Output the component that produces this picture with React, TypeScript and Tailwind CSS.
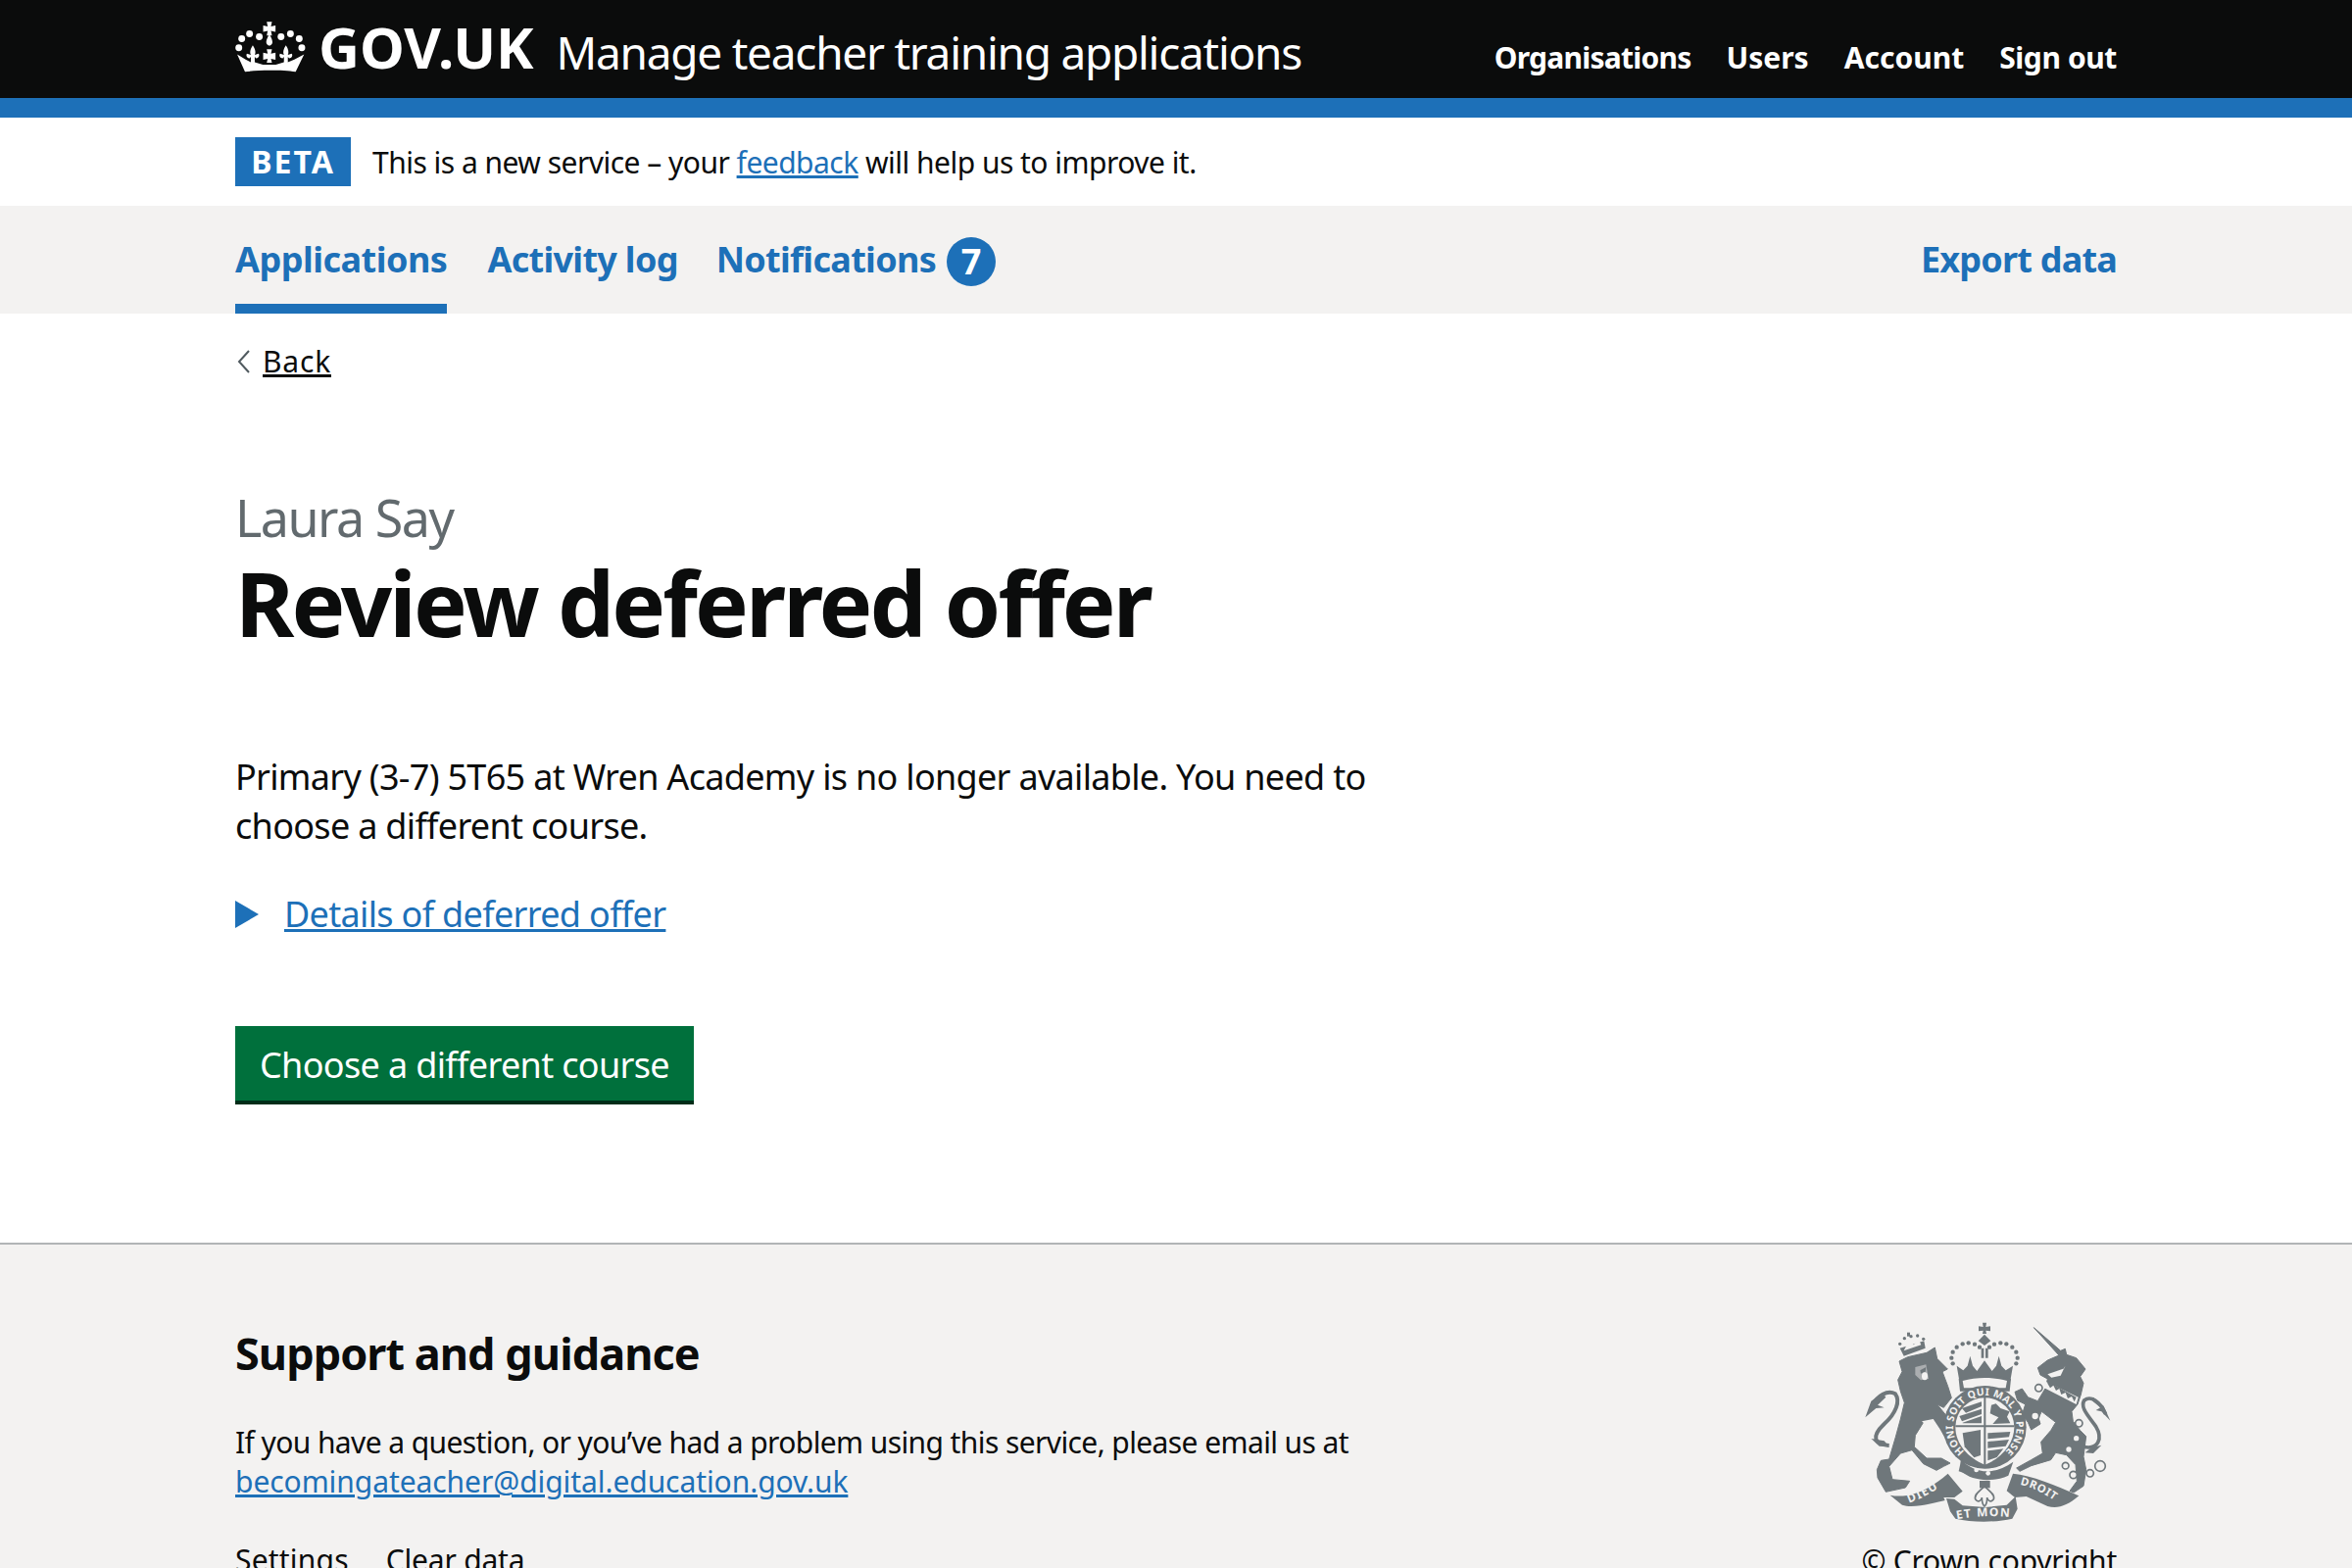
const font = "[font-family:'Noto_Sans',sans-serif]";

function CrownLogo() {
  const dots = [[44, 76], [68, 61], [98, 70], [165, 70], [194, 61], [221, 76], [35, 104], [229, 104]];
  const fleur = "C86 108 88 118 84 126L96 122C100 128 96 136 88 136L84 132V150H72V132L68 136C60 136 56 128 60 122L72 126C68 118 70 108 78 96Z";
  return (
    <svg viewBox="25 20 215 160" className="w-[72px] h-[53px] shrink-0" fill="#fff">
      {dots.map(([x, y]) => (
        <circle key={`${x}-${y}`} cx={x} cy={y} r="10.5" />
      ))}
      <path d="M121 24h16l-3 14 14-3v20l-14-3 3 14h-16l3-14-14 3V35l14 3z" />
      <path d="M129 62C136 74 141 84 137 92 133 99 125 99 121 92 117 84 122 74 129 62Z" />
      <path d={`M78 96${fleur}`} />
      <path d={`M78 96${fleur}`} transform="translate(102 0)" />
      <path d="M121 108h16l-3 14 14-3v22l-14-3 3 12h-16l3-12-14 3v-22l14 3z" />
      <path d="M54 178 30 124 56 140 72 148H84L109 156H149L174 148H186L206 140 236 124 210 178C170 172 94 172 54 178Z" />
    </svg>
  );
}

function Crest() {
  const c = "#6f777b";
  const bg = "#f3f2f1";
  const crownDots = [
    [400, 215], [396, 198], [400, 180], [412, 165], [430, 155], [448, 152], [467, 156], [482, 165],
    [512, 165], [527, 156], [546, 152], [564, 155], [582, 165], [594, 180], [598, 198], [594, 215],
  ];
  const lionDots = [[238, 155], [252, 138], [272, 132], [292, 130], [310, 140]];
  const letters = { fill: bg, fontFamily: "Noto Sans, sans-serif", fontWeight: 700 };
  return (
    <svg viewBox="128 85 759 621" className="w-[253px] h-[207px] mr-[5px] shrink-0" fill={c}>
      <defs>
        <path id="g1" d="M436 484A97 97 0 1 1 560 484" />
        <path id="g2" d="M266 642Q322 622 374 584" />
        <path id="g3" d="M412 692Q495 676 586 686" />
        <path id="g4" d="M606 586Q670 600 730 650" />
      </defs>
      {/* Lion */}
      <path stroke={c} strokeWidth="3" strokeLinejoin="round" d="M236 208 262 195 320 182 345 166 352 200 384 232 368 240 385 285 396 320 372 350 352 340 378 372 402 420 406 445 378 447 360 415 340 385 310 395 285 435 282 470 320 505 365 505 392 520 372 530 350 542 310 522 275 480 240 490 205 530 215 570 268 575 255 595 195 608 170 565 168 540 180 512 205 508 225 440 240 385 252 335 240 300 232 265 245 240Z" />
      <path d="M205 466C160 462 148 440 190 400 226 368 240 330 224 308 200 295 170 312 152 345" fill="none" stroke={c} strokeWidth="12" />
      <path d="M185 305 150 330 132 380 165 352 190 350 170 342 195 318Z" />
      <path d="M150 445 175 468 205 470 190 452Z" />
      <path d="M285 226 318 218 322 240 326 262 302 266 285 250Z" fill={bg} opacity="0.45" />
      <path d="M300 236 318 226 316 240 302 246Z" />
      <ellipse cx="314" cy="254" rx="9" ry="12" fill={bg} />
      <path d="M305 392 340 385 360 415 378 447 350 420 325 410Z" fill={bg} />
      {/* Lion crown */}
      {lionDots.map(([x, y]) => (
        <circle key={`${x}-${y}`} cx={x} cy={y} r="5" />
      ))}
      <path d="M238 168 312 146 316 168 250 192Z" />
      <path d="M260 120h9v12h-9z" />
      <path d="M258 160 268 146 280 158 296 142 303 158 250 176Z" fill={bg} />
      {/* Crown */}
      <path d="M491 90h12l-2 13 14-2v15l-14-2 2 10h-12l2-10-14 2v-15l14 2z" />
      <path d="M497 126 516 146 497 160 478 146Z" />
      <path d="M487 168h8v30h-8zM500 168h8v30h-8z" />
      {crownDots.map(([x, y]) => (
        <circle key={`${x}-${y}`} cx={x} cy={y} r="6.5" />
      ))}
      <path d="M412 222 432 236 445 222 453 192 461 222 474 238 497 206 520 238 533 222 541 192 549 222 562 236 584 222 576 268C530 252 466 252 420 268Z" />
      <path d="M418 262C470 246 526 246 578 262L574 300H422Z" />
      <path d="M430 268C472 256 524 256 566 268L562 290H434Z" fill={bg} />
      {/* Garter */}
      <circle cx="498" cy="410" r="127" />
      <path d="M424 508C470 556 530 556 585 516L570 558C520 580 460 575 425 545Z" />
      <path d="M428 500 440 552 418 545Z" />
      <circle cx="472" cy="541" r="7" fill={bg} />
      <circle cx="508" cy="551" r="7" fill={bg} />
      <text {...letters} fontSize="31">
        <textPath href="#g1" textLength="474" lengthAdjust="spacing">HONI SOIT QUI MAL Y PENSE</textPath>
      </text>
      {/* Shield */}
      <path d="M408 410A90 90 0 0 1 588 410C588 460 550 505 498 525 446 505 408 460 408 410Z" fill={bg} />
      <path d="M495 318h6v208h-6zM408 404h180v6H408z" />
      <path d="M428 352 488 332V346L440 366ZM420 376 488 354V370L428 392ZM430 396 488 376V398H430Z" />
      <path d="M518 342 532 338 546 352 574 362 566 378 576 398 522 400 540 380 514 368Z" />
      <path d="M430 428 485 418V496L465 503 436 470Z" />
      <path d="M507 428 576 424 572 440 507 446ZM507 454 572 448 562 468 507 474ZM507 482 555 476 535 502 507 512Z" />
      {/* Unicorn */}
      <path stroke={c} strokeWidth="3" strokeLinejoin="round" d="M648 105 730 176 744 170 748 188 778 198 806 232 790 255 800 275 792 310 782 340 764 362 768 392 790 420 808 438 800 500 808 540 800 590 770 610 758 605 780 575 776 525 748 495 715 488 700 510 640 528 605 545 595 535 640 510 675 490 670 455 700 420 715 395 672 362 662 382 668 400 640 418 630 395 612 372 622 340 598 328 590 302 612 292 630 318 660 330 684 290 690 262 668 250 660 228 690 205 725 190Z" />
      <path d="M684 270 784 318 778 340 680 290Z" fill={bg} />
      <path d="M690 276 698 290 708 282 716 298 726 292 732 310 745 304 752 322 764 316 772 332 778 318 690 270Z" />
      <path d="M690 248 742 230 744 222 730 252 702 258Z" fill={bg} />
      <path d="M800 470C845 480 860 445 838 408 812 372 790 350 802 328 822 312 850 330 868 370" fill="none" stroke={c} strokeWidth="11" />
      <path d="M830 318 862 345 882 390 855 362 838 358 852 350 828 330Z" />
      <path d="M855 465 830 490 805 488 825 472Z" />
      {[[663, 290, 11], [652, 376, 12], [786, 398, 11], [745, 528, 10], [769, 556, 11], [820, 551, 11], [851, 529, 16]].map(([x, y, r]) => (
        <circle key={`${x}-${y}`} cx={x} cy={y} r={r} fill={bg} stroke={c} strokeWidth="5" />
      ))}
      <circle cx="778" cy="444" r="8" fill={bg} />
      <circle cx="755" cy="478" r="8" fill={bg} />
      {/* Scroll */}
      <path d="M208 618C270 630 330 600 385 552L430 606 405 625 372 625 376 634C350 640 280 660 245 648Z" />
      <path d="M584 552C640 556 720 590 786 620 750 652 720 660 690 652L625 622 590 625 565 605Z" />
      <path d="M380 628 405 630 430 650 500 655 565 648 592 622 598 660 582 690C530 702 460 702 408 690L392 668Z" />
      <text {...letters} fontSize="36" letterSpacing="4">
        <textPath href="#g2" startOffset="0">DIEU</textPath>
      </text>
      <text {...letters} fontSize="36" letterSpacing="4">
        <textPath href="#g3" startOffset="0">ET MON</textPath>
      </text>
      <text {...letters} fontSize="34" letterSpacing="2">
        <textPath href="#g4" startOffset="0">DROIT</textPath>
      </text>
      {/* Fleur */}
      <path d="M482 574h32v22h-32z" />
      <path d="M497 590C510 605 530 615 525 630 515 645 505 630 505 625 505 640 500 650 497 652 494 650 489 640 489 625 489 630 479 645 469 630 464 615 484 605 497 590Z" fill="none" stroke={c} strokeWidth="5" />
    </svg>
  );
}

export default function App() {
  return (
    <div className={`${font} w-full h-[1600px] overflow-hidden bg-white text-[#0b0c0c]`}>
      <header className="h-[120px] bg-[#0b0c0c] border-b-[20px] border-[#1d70b8] text-white">
        <div className="mx-auto w-[1920px] h-full flex justify-between">
          <div className="flex items-start pt-[21px]">
            <CrownLogo />
            <span className="ml-[13px] mt-[-8px] text-[58px] leading-[70px] font-bold">GOV.UK</span>
            <span className="ml-[23px] mt-[1px] text-[46px] leading-[62px] tracking-[-1.26px]">Manage teacher training applications</span>
          </div>
          <nav className="flex gap-[36px] pt-[37px] text-[30px] leading-[44px] font-bold">
            <span className="tracking-[-0.75px]">Organisations</span>
            <span>Users</span>
            <span>Account</span>
            <span className="tracking-[-0.4px]">Sign out</span>
          </nav>
        </div>
      </header>

      <div className="mx-auto w-[1920px] h-[90px] flex items-center">
        <span className="w-[118px] h-[50px] bg-[#1d70b8] text-white text-[32px] leading-[50px] font-bold text-center tracking-[2px]">BETA</span>
        <p className="ml-[22px] text-[30px] tracking-[-0.52px]">
          This is a new service – your <a className="text-[#1d70b8] underline">feedback</a> will help us to improve it.
        </p>
      </div>

      <div className="h-[110px] bg-[#f3f2f1]">
        <div className="mx-auto w-[1920px] h-full flex justify-between text-[36px] leading-[50px] font-bold text-[#1d70b8] tracking-[-0.7px]">
          <div className="flex">
            <span className="h-full pt-[30px] border-b-[10px] border-[#1d70b8] tracking-[-0.5px]">Applications</span>
            <span className="ml-[41px] pt-[30px]">Activity log</span>
            <span className="ml-[39px] pt-[30px] flex items-start gap-[11px]">
              Notifications
              <span className="w-[50px] h-[50px] mt-[2px] rounded-full bg-[#1d70b8] text-white text-center tracking-normal">7</span>
            </span>
          </div>
          <span className="pt-[30px] tracking-[-0.8px]">Export data</span>
        </div>
      </div>

      <main className="mx-auto w-[1920px] h-[948px]">
        <div className="pt-[29px] flex items-center text-[30px] leading-[40px] tracking-[0.8px]">
          <svg viewBox="0 0 14 24" className="ml-[2px] w-[14px] h-[24px] mr-[12px]" fill="none" stroke="#505a5f" strokeWidth="2"><path d="M12 1 2 12l10 11" /></svg>
          <a className="underline">Back</a>
        </div>
        <p className="mt-[109px] text-[52px] leading-[60px] text-[#626a6e] tracking-[-1.5px]">Laura Say</p>
        <h1 className="mt-[7px] text-[92px] leading-[100px] font-bold tracking-[-2.9px]">Review deferred offer</h1>
        <p className="mt-[103px] text-[36px] leading-[50px] tracking-[-0.69px]">
          Primary (3-7) 5T65 at Wren Academy is no longer available. You need to<br />choose a different course.
        </p>
        <div className="mt-[40px] flex items-center text-[36px] leading-[50px] text-[#1d70b8] tracking-[-0.67px]">
          <svg viewBox="0 0 24 28" className="w-[24px] h-[28px] mr-[26px]" fill="#1d70b8"><path d="M0 0 24 14 0 28Z" /></svg>
          <a className="underline">Details of deferred offer</a>
        </div>
        <button className="block mt-[89px] w-[468px] h-[80px] pt-[3px] bg-[#00703c] border-b-[4px] border-[#002d18] text-white text-[36px] leading-[50px] text-center tracking-[-0.65px]">
          Choose a different course
        </button>
      </main>

      <footer className="border-t-2 border-[#b1b4b6] bg-[#f3f2f1] h-[400px]">
        <div className="mx-auto w-[1920px] flex justify-between">
          <div className="pt-[81px]">
            <h2 className="text-[45px] leading-[60px] font-bold tracking-[-0.95px]">Support and guidance</h2>
            <p className="mt-[41px] text-[30px] leading-[40px]">
              <span className="tracking-[-0.6px]">If you have a question, or you’ve had a problem using this service, please email us at</span><br />
              <a className="text-[#1d70b8] underline tracking-[-0.07px]">becomingateacher@digital.education.gov.uk</a>
            </p>
            <div className="mt-[40px] flex gap-[38px] text-[30px] leading-[40px]">
              <span className="tracking-[0.2px]">Settings</span>
              <span className="tracking-[-0.2px]">Clear data</span>
            </div>
          </div>
          <div className="pt-[78px] flex flex-col items-end">
            <Crest />
            <span className="mt-[18px] text-[30px] leading-[40px] tracking-[-0.25px]">© Crown copyright</span>
          </div>
        </div>
      </footer>
    </div>
  );
}
